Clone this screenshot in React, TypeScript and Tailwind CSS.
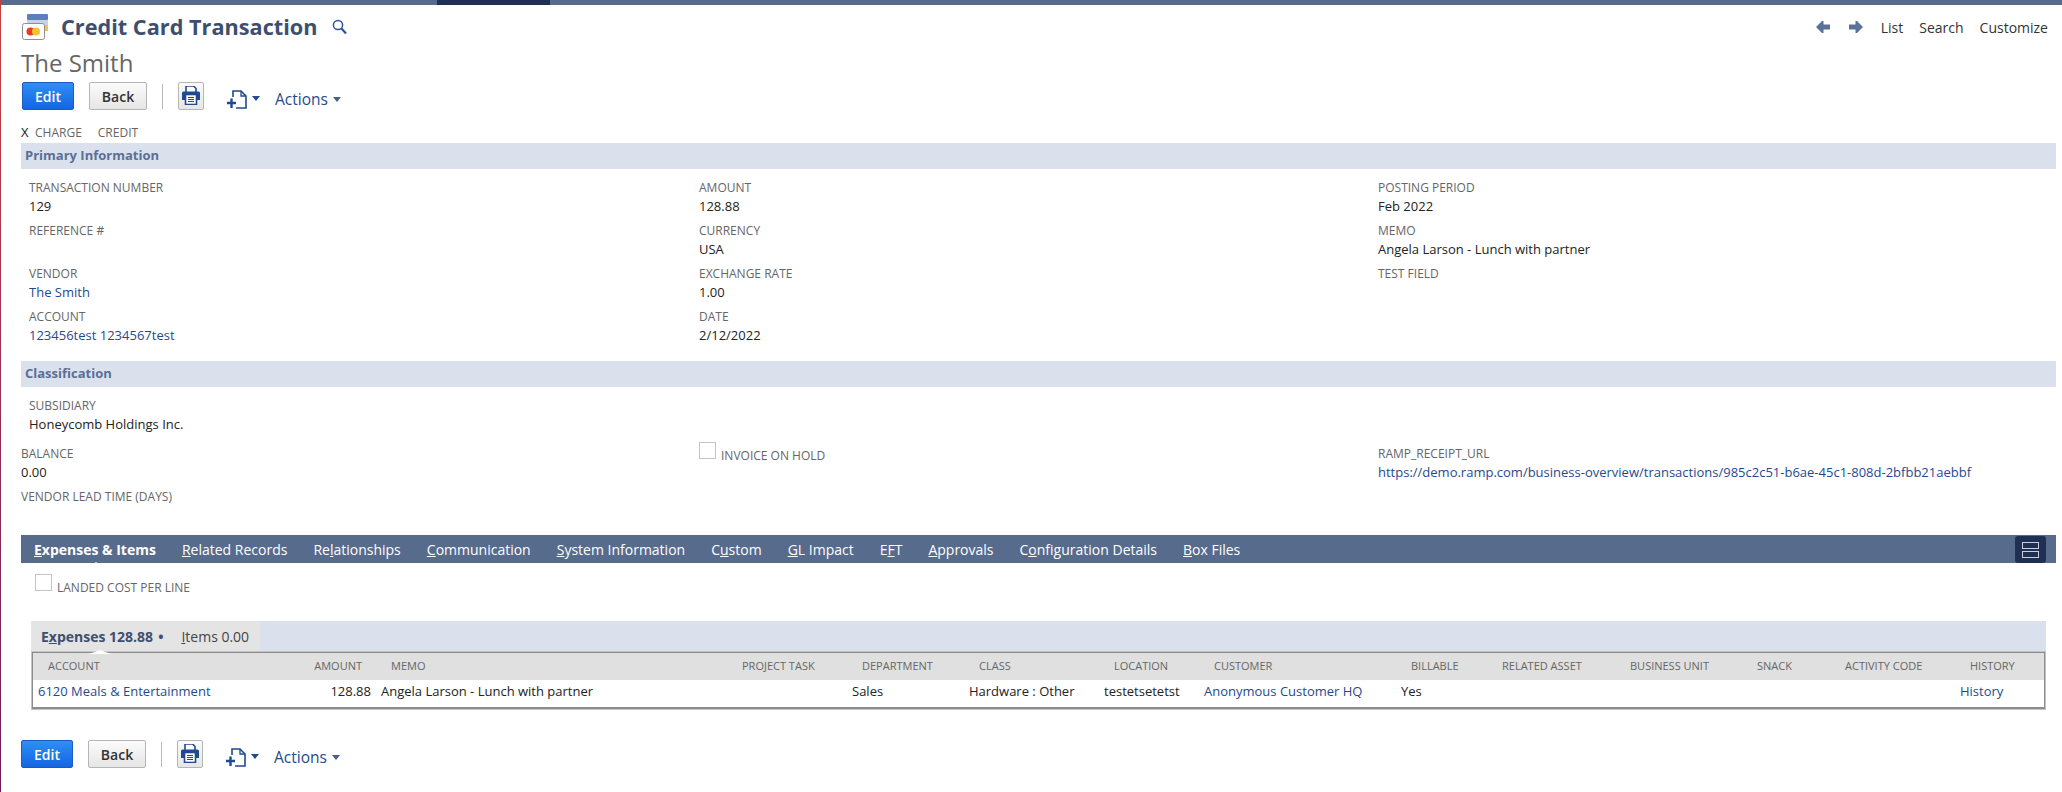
const linkCls = "text-[#1f4a8f]";

function TitleIcon() {
  return (
    <svg width="27" height="26" viewBox="0 0 27 26" className="shrink-0">
      <rect x="5" y="0" width="21" height="6" rx="1" fill="#5f7fb8" />
      <rect x="5" y="6" width="21" height="5" fill="#c5d2e8" />
      <rect x="5" y="11" width="21" height="6" fill="#dbe3f0" />
      <rect x="23" y="11" width="3" height="6" fill="#f6c445" />
      <rect x="0.5" y="9.5" width="22" height="16" rx="2" fill="#fff" stroke="#8f8f8f" />
      <circle cx="8.5" cy="17.5" r="4" fill="#ea3a24" />
      <circle cx="14" cy="17.5" r="4" fill="#f9c22e" />
    </svg>
  );
}

function SearchIcon() {
  return (
    <svg width="15" height="16" viewBox="0 0 15 16" className="shrink-0" fill="none" stroke="#2d5597">
      <circle cx="6" cy="6" r="4.6" strokeWidth="1.5" />
      <path d="M9.5 9.5 L14 14.5" strokeWidth="2.2" />
    </svg>
  );
}

function ArrowIcon({ flip }: { flip?: boolean }) {
  return (
    <svg width="14" height="12" viewBox="0 0 14 12" className={flip ? "shrink-0 rotate-180" : "shrink-0"}>
      <path d="M6 0 L0 6 L6 12 L7.5 12 L7.5 8.5 L14 8.5 L14 3.5 L7.5 3.5 L7.5 0 Z" fill="#5a7199" />
    </svg>
  );
}

function PrintIcon() {
  return (
    <svg width="18" height="19" viewBox="0 0 18 19">
      <path d="M4 0 H11.5 L14 2.5 V7 H4 Z" fill="#fff" stroke="#1f4a8f" strokeWidth="1.6" />
      <path d="M1.5 5.5 H16.5 Q18 5.5 18 7 V14 H14.5 V12 H3.5 V14 H0 V7 Q0 5.5 1.5 5.5 Z" fill="#1f4a8f" />
      <rect x="3.5" y="8.5" width="11" height="10" fill="#fff" stroke="#1f4a8f" strokeWidth="1.6" />
      <path d="M6 11.5 H12 M6 13.5 H12 M6 15.5 H12" stroke="#1f4a8f" strokeWidth="1.1" />
    </svg>
  );
}

function NewDocIcon() {
  return (
    <svg width="20" height="19" viewBox="0 0 20 19" className="shrink-0" fill="none" stroke="#1f4a8f">
      <path d="M6 7 V1 H14 L19 6 V18 H9" strokeWidth="1.6" />
      <path d="M14 1 V6 H19" strokeWidth="1.3" />
      <path d="M0 13 H9 M4.5 8.5 V18" strokeWidth="2.4" />
    </svg>
  );
}

function Caret({ color = "#4a5f85" }: { color?: string }) {
  return (
    <svg width="8" height="5" viewBox="0 0 8 5" className="shrink-0">
      <path d="M0 0 H8 L4 5 Z" fill={color} />
    </svg>
  );
}

function Toolbar() {
  return (
    <div className="flex h-[28px] items-start">
      <button className="flex h-[28px] w-[52px] items-center justify-center rounded-[2px] border border-[#1a5cc0] bg-gradient-to-b from-[#2f8ef4] to-[#1565e3] text-[14px] font-semibold text-white">
        Edit
      </button>
      <button className="ml-[15px] flex h-[28px] w-[58px] items-center justify-center rounded-[2px] border border-[#b5b5b5] bg-gradient-to-b from-[#fbfbfb] to-[#e6e6e6] text-[14px] font-semibold text-[#333]">
        Back
      </button>
      <div className="ml-[15px] mt-[2px] h-[25px] w-px bg-[#b9b9b9]" />
      <button className="ml-[15px] flex h-[28px] w-[26px] justify-center rounded-[2px] border border-[#b5b5b5] bg-gradient-to-b from-[#fbfbfb] to-[#e6e6e6] pt-[3px]">
        <PrintIcon />
      </button>
      <div className="ml-[23px] mt-[8px] flex items-center gap-[5px]">
        <NewDocIcon />
        <span className="mb-[3px] flex">
          <Caret color="#1f4a8f" />
        </span>
      </div>
      <div className="ml-[15px] mt-[7px] flex h-[20px] items-center gap-[5px]">
        <span className="text-[15.5px] font-medium leading-[20px] text-[#1f4a8f]">Actions</span>
        <Caret />
      </div>
    </div>
  );
}

function SectionBar({ title }: { title: string }) {
  return (
    <div className="flex h-[26px] items-center bg-[#dbe1ec] pl-[4px] text-[13px] font-bold text-[#5a6f95]">
      {title}
    </div>
  );
}

function Field({ label, value, link, flush }: { label: string; value?: string; link?: boolean; flush?: boolean }) {
  return (
    <div className={flush ? "h-[43px]" : "h-[43px] pl-[8px]"}>
      <div className="h-[18px] text-[12px] leading-[18px] text-[#666]">{label}</div>
      {value && <div className={`h-[18px] text-[13px] leading-[18px] ${link ? linkCls : "text-[#222]"}`}>{value}</div>}
    </div>
  );
}

function Check() {
  return <div className="h-[17px] w-[17px] border border-[#c4c4c4] bg-white" />;
}

const tabs: [string, string, string][] = [
  ["", "R", "elated Records"],
  ["Re", "l", "ationships"],
  ["", "C", "ommunication"],
  ["", "S", "ystem Information"],
  ["C", "u", "stom"],
  ["", "G", "L Impact"],
  ["E", "F", "T"],
  ["", "A", "pprovals"],
  ["C", "o", "nfiguration Details"],
  ["", "B", "ox Files"],
];

const columns: { head: string; cell?: string; kind?: "link" | "right" }[] = [
  { head: "ACCOUNT", cell: "6120 Meals & Entertainment", kind: "link" },
  { head: "AMOUNT", cell: "128.88", kind: "right" },
  { head: "MEMO", cell: "Angela Larson - Lunch with partner" },
  { head: "PROJECT TASK" },
  { head: "DEPARTMENT", cell: "Sales" },
  { head: "CLASS", cell: "Hardware : Other" },
  { head: "LOCATION", cell: "testetsetetst" },
  { head: "CUSTOMER", cell: "Anonymous Customer HQ", kind: "link" },
  { head: "BILLABLE", cell: "Yes" },
  { head: "RELATED ASSET" },
  { head: "BUSINESS UNIT" },
  { head: "SNACK" },
  { head: "ACTIVITY CODE" },
  { head: "HISTORY", cell: "History", kind: "link" },
];

const gridCols =
  "grid grid-cols-[270px_73px_351px_120px_117px_135px_100px_197px_91px_128px_127px_88px_125px_1fr]";

export default function App() {
  return (
    <div className="min-h-[792px] bg-gradient-to-b from-[#c4403e] to-[#6d1c5e] pl-px font-['Open_Sans',sans-serif]">
      <div className="min-h-[792px] bg-white">
        <div className="flex h-[5px] bg-[#576b8d]">
          <div className="ml-[436px] w-[113px] bg-[#1f3054]" />
        </div>

        <div className="pl-[20px] pr-[6px]">
          <div className="mt-[9px] flex h-[26px] items-center pl-px pr-[8px]">
            <TitleIcon />
            <h1 className="ml-[12px] text-[21.7px] font-bold leading-[26px] text-[#3e4f6e]">Credit Card Transaction</h1>
            <span className="ml-[14px]">
              <SearchIcon />
            </span>
            <div className="ml-auto flex items-center text-[14px] text-[#333]">
              <ArrowIcon />
              <span className="ml-[19px] flex">
                <ArrowIcon flip />
              </span>
              <span className="ml-[18px]">List</span>
              <span className="ml-[16px]">Search</span>
              <span className="ml-[16px]">Customize</span>
            </div>
          </div>

          <div className="mt-[8px] h-[30px] text-[24px] leading-[30px] text-[#666]">The Smith</div>

          <div className="mt-[4px] pl-px">
            <Toolbar />
          </div>

          <div className="mt-[14px] flex h-[18px] items-center text-[12px] leading-[18px] text-[#666]">
            <span className="mb-[2px] w-[14px] text-[13px] text-[#222]">X</span>
            <span>CHARGE</span>
            <span className="ml-[16px]">CREDIT</span>
          </div>

          <div className="mt-px">
            <SectionBar title="Primary Information" />
          </div>

          <div className="grid grid-cols-[678px_679px_1fr] pt-[10px]">
            <div>
              <Field label="TRANSACTION NUMBER" value="129" />
              <Field label="REFERENCE #" />
              <Field label="VENDOR" value="The Smith" link />
              <Field label="ACCOUNT" value="123456test 1234567test" link />
            </div>
            <div>
              <Field flush label="AMOUNT" value="128.88" />
              <Field flush label="CURRENCY" value="USA" />
              <Field flush label="EXCHANGE RATE" value="1.00" />
              <Field flush label="DATE" value="2/12/2022" />
            </div>
            <div>
              <Field flush label="POSTING PERIOD" value="Feb 2022" />
              <Field flush label="MEMO" value="Angela Larson - Lunch with partner" />
              <Field flush label="TEST FIELD" />
            </div>
          </div>

          <div className="mt-[10px]">
            <SectionBar title="Classification" />
          </div>

          <div className="h-[58px] pt-[10px]">
            <Field label="SUBSIDIARY" value="Honeycomb Holdings Inc." />
          </div>

          <div className="grid grid-cols-[678px_679px_1fr]">
            <div>
              <Field flush label="BALANCE" value="0.00" />
              <Field flush label="VENDOR LEAD TIME (DAYS)" />
            </div>
            <div className="flex items-start gap-[5px]">
              <span className="mt-[-3px]">
                <Check />
              </span>
              <span className="mt-[2px] text-[12px] leading-[18px] text-[#666]">INVOICE ON HOLD</span>
            </div>
            <Field flush label="RAMP_RECEIPT_URL" value="https://demo.ramp.com/business-overview/transactions/985c2c51-b6ae-45c1-808d-2bfbb21aebbf" link />
          </div>

          <div className="mt-[4px] flex h-[28px] items-center bg-[#576b8d] pl-[13px] pr-[10px] text-[14px] text-white">
            <span className="relative font-bold">
              <u>E</u>xpenses &amp; Items
              <span className="absolute left-[56px] top-[23px] h-0 w-0 border-x-[6px] border-b-[5px] border-x-transparent border-b-white" />
            </span>
            {tabs.map(([a, b, c]) => (
              <span key={a + b + c} className="ml-[26px]">
                {a}
                <u>{b}</u>
                {c}
              </span>
            ))}
            <div className="ml-auto mt-px flex h-[27px] w-[31px] flex-col items-center justify-center gap-[2px] rounded-[3px] bg-[#1f3054]">
              <div className="h-[7px] w-[17px] border border-[#c9d0dd]" />
              <div className="h-[7px] w-[17px] border border-[#c9d0dd]" />
            </div>
          </div>

          <div className="ml-[14px] mt-[11px] flex h-[30px] items-start gap-[5px]">
            <Check />
            <span className="mt-[5px] text-[12px] leading-[18px] text-[#666]">LANDED COST PER LINE</span>
          </div>

          <div className="ml-[10px] mr-[10px] mt-[17px]">
            <div className="flex h-[30px] bg-[#dbe1ec]">
              <div className="flex w-[229px] items-center bg-[#e4e4e4] pl-[10px] text-[14px] text-[#3e4f6e]">
                <span className="relative font-bold">
                  E<u>x</u>penses 128.88
                  <span className="absolute left-[48px] top-[24px] h-0 w-0 border-x-[11px] border-b-[4px] border-x-transparent border-b-white" />
                </span>
                <span className="ml-[5px] font-bold">•</span>
                <span className="ml-[18px] text-[#444]">
                  <u>I</u>tems 0.00
                </span>
              </div>
            </div>

            <div className="border border-[#c4c4c4]">
              <div className="border border-b-2 border-[#8c8c8c]">
                <div className={`${gridCols} h-[27px] items-center bg-[#e0e0e0] text-[11px] text-[#666]`}>
                  {columns.map((c) => (
                    <div key={c.head} className={c.kind === "right" ? "pr-[14px] text-right" : "pl-[15px]"}>
                      {c.head}
                    </div>
                  ))}
                </div>
                <div className={`${gridCols} h-[27px] items-center pb-[4px] text-[13px] text-[#222]`}>
                  {columns.map((c) => (
                    <div
                      key={c.head}
                      className={c.kind === "right" ? "pr-[5px] text-right" : c.kind === "link" ? `pl-[5px] ${linkCls}` : "pl-[5px]"}
                    >
                      {c.cell}
                    </div>
                  ))}
                </div>
              </div>
            </div>
          </div>

          <div className="mt-[30px]">
            <Toolbar />
          </div>
        </div>
      </div>
    </div>
  );
}
